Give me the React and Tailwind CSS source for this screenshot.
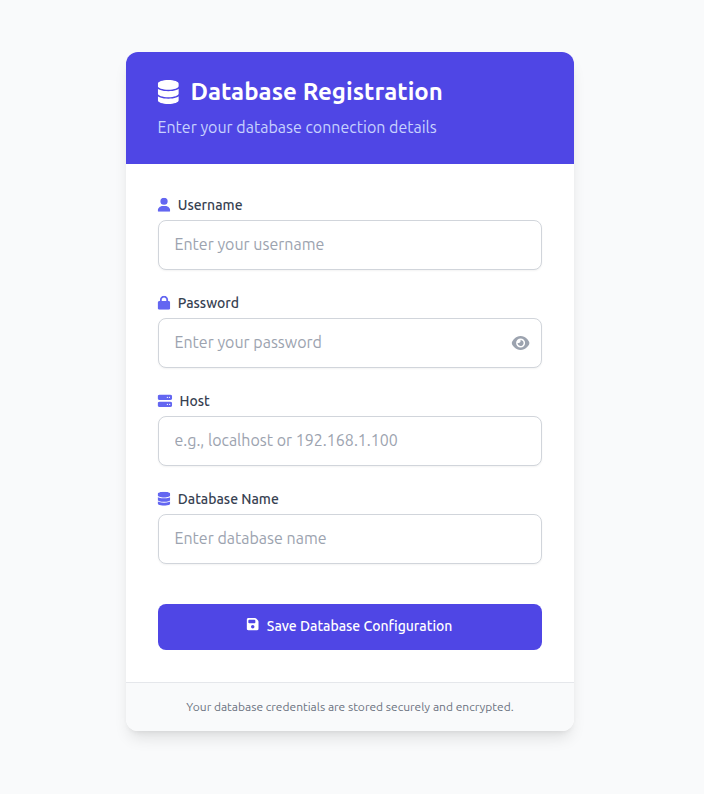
import { FaDatabase, FaUser, FaLock, FaServer, FaEye, FaFloppyDisk } from "react-icons/fa6";

const fields = [
  { id: "username", label: "Username", Icon: FaUser, size: "w-[12.25px]", placeholder: "Enter your username" },
  { id: "password", label: "Password", Icon: FaLock, size: "w-[12.25px]", placeholder: "Enter your password", reveal: true },
  { id: "host", label: "Host", Icon: FaServer, size: "w-[14px]", placeholder: "e.g., localhost or 192.168.1.100" },
  { id: "database", label: "Database Name", Icon: FaDatabase, size: "w-[12.25px]", placeholder: "Enter database name" },
];

function Field({ id, label, Icon, size, placeholder, reveal }) {
  return (
    <div>
      <label htmlFor={id} className="-ml-[0.5px] mb-1 flex h-5 items-center text-sm font-medium text-[#374151]">
        <span className="mr-2 inline-flex -translate-y-[1.2px] -translate-x-[0.1px] scale-x-[1.04]">
          <Icon preserveAspectRatio="none" className={`h-[14px] shrink-0 text-[#6366f1] ${size}`} />
        </span>
        <span className="relative -top-px whitespace-nowrap">{label}</span>
      </label>
      <div className="relative">
        <input
          id={id}
          type={reveal ? "password" : "text"}
          placeholder={placeholder}
          className="block h-[50px] w-full rounded-lg border border-[#d1d5db] bg-white pt-3 pr-4 pb-[14px] pl-[15.5px] text-base shadow-[0_1px_2px_0_rgb(0_0_0/0.05)] placeholder:text-[#9ca3af]"
        />
        {reveal && (
          <button type="button" aria-label="Show password" className="absolute inset-y-0 right-0 flex items-center pr-3 text-[#9ca3af]">
            <span className="inline-flex -translate-x-[0.4px]">
              <FaEye className="h-4 w-[18px]" />
            </span>
          </button>
        )}
      </div>
    </div>
  );
}

export default function App() {
  return (
    <div className="flex min-h-screen justify-center bg-[#f9fafb] pt-[52px] pr-1 font-['Ubuntu','Open_Sans','Noto_Sans',sans-serif]">
      <div className="h-[679px] w-[448px] overflow-hidden rounded-xl bg-white shadow-[0_10px_15px_-3px_rgb(0_0_0/0.1),0_4px_6px_-4px_rgb(0_0_0/0.1)]">
        <div className="bg-[#4f46e5] px-8 py-6">
          <h1 className="-ml-[0.5px] flex h-8 items-center text-2xl font-semibold text-white">
            <span className="mr-3 inline-flex -translate-x-[0.2px]">
              <FaDatabase className="h-6 w-[21px] shrink-0" />
            </span>
            <span className="tracking-[0.04px] whitespace-nowrap">Database Registration</span>
          </h1>
          <p className="mt-2 text-base leading-6 text-[#c7d2fe]">
            <span className="relative -top-px -left-[0.5px] whitespace-nowrap">Enter your database connection details</span>
          </p>
        </div>
        <form className="space-y-6 p-8">
          {fields.map((f) => (
            <Field key={f.id} {...f} />
          ))}
          <div className="pt-4">
            <button type="button" className="flex h-[46px] w-full items-center justify-center rounded-lg bg-[#4f46e5] pr-px text-sm font-medium text-white">
              <span className="mr-2 inline-flex -translate-x-[0.4px] -translate-y-[2.8px]">
                <FaFloppyDisk className="h-[14px] w-[12.25px] shrink-0" />
              </span>
              <span className="relative -top-px whitespace-nowrap">Save Database Configuration</span>
            </button>
          </div>
        </form>
        <div className="border-t border-[#e5e7eb] bg-[#f9fafb] px-8 py-4 text-center text-xs leading-4 text-[#6b7280]">
          <p>Your database credentials are stored securely and encrypted.</p>
        </div>
      </div>
    </div>
  );
}
